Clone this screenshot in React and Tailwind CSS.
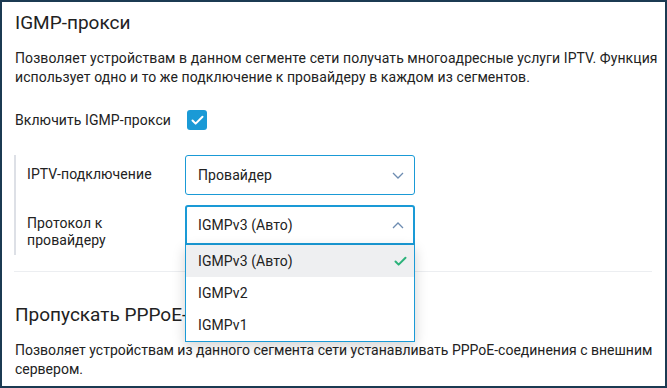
import { Check } from 'lucide-react';

function Chevron({ up }) {
  return (
    <svg width="12" height="7" viewBox="0 0 12 7" className="shrink-0">
      <polyline
        points={up ? '1,6 6,1 11,6' : '1,1 6,6 11,1'}
        fill="none"
        stroke="#6d8cb1"
        strokeWidth="1.3"
      />
    </svg>
  );
}

const options = ['IGMPv3 (Авто)', 'IGMPv2', 'IGMPv1'];

export default function App() {
  return (
    <div className="h-[388px] w-[667px] overflow-hidden border-2 border-[#1b3a52] bg-white font-['Roboto',sans-serif] text-[#222]">
      <div className="pl-[12px] pr-[6px] pt-[9px]">
        <h2 className="pl-px text-[19px] leading-6">IGMP-прокси</h2>
        <p className="mt-[14px] pl-px text-[14px] leading-[19px] tracking-[0.08px]">
          Позволяет устройствам в данном сегменте сети получать многоадресные услуги IPTV. Функция
          использует одно и то же подключение к провайдеру в каждом из сегментов.
        </p>

        <div className="mt-[23px] flex h-5 items-center pl-px text-[14px] tracking-[0.08px]">
          <span className="w-[172px]">Включить IGMP-прокси</span>
          <span className="flex h-5 w-5 items-center justify-center rounded-[3px] bg-[#1a9ad6]">
            <Check size={15} strokeWidth={3.2} className="text-white" />
          </span>
        </div>

        <div className="mt-[25px] flex flex-col gap-[10px] border-l-2 border-[#dde0e6] pb-[10px] pl-[11px] text-[14px] tracking-[0.08px]">
          <div className="flex h-10 items-start">
            <span className="w-[158px] pt-[10px] leading-[18px]">IPTV-подключение</span>
            <div className="flex h-10 w-[230px] items-center justify-between rounded-[3px] border border-[#1a9ad6] pl-3 pr-[10px]">
              <span>Провайдер</span>
              <Chevron />
            </div>
          </div>
          <div className="flex h-10 items-start">
            <span className="w-[130px] pt-[10px] leading-[17px]">Протокол к провайдеру</span>
            <div className="relative ml-[28px] w-[230px]">
              <div className="flex h-10 items-center justify-between rounded-t-[3px] border-2 border-[#1a9ad6] pl-[11px] pr-[9px]">
                <span>IGMPv3 (Авто)</span>
                <Chevron up />
              </div>
              <ul className="absolute left-0 top-full z-10 w-full border border-t-0 border-[#1a9ad6] bg-white shadow-[0_4px_12px_rgba(0,0,0,0.18)]">
                {options.map((opt, i) => (
                  <li
                    key={opt}
                    className={`flex h-8 items-center justify-between pl-3 pr-[6px] ${i === 0 ? 'bg-[#eeeff1]' : ''}`}
                  >
                    <span>{opt}</span>
                    {i === 0 && <Check size={15} strokeWidth={3.2} className="text-[#2bb27a]" />}
                  </li>
                ))}
              </ul>
            </div>
          </div>
        </div>

        <div className="mr-[7px] mt-[16px] h-px bg-[#eceef1]" />

        <h2 className="mt-[31px] pl-px text-[19px] leading-6">Пропускать PPPoE-соединения</h2>
        <p className="mt-[14px] whitespace-nowrap pl-px text-[14px] leading-[19px]">
          Позволяет устройствам из данного сегмента сети устанавливать PPPoE-соединения с внешним
          <br />
          сервером.
        </p>
      </div>
    </div>
  );
}
